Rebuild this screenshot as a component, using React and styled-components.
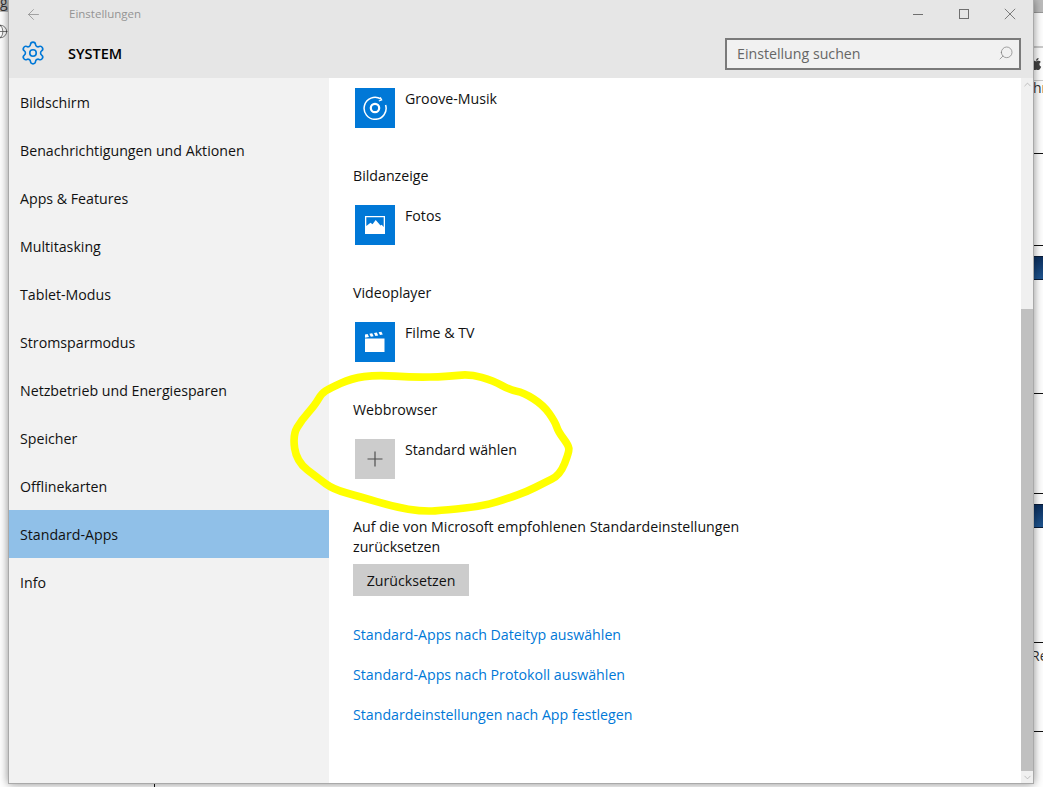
import React from 'react';
import styled, { createGlobalStyle } from 'styled-components';
import { Settings, Globe, ArrowLeft, Search, ChevronUp, ChevronDown } from 'lucide-react';
import { FaApple } from 'react-icons/fa';

const GlobalStyle = createGlobalStyle`
  html, body {
    margin: 0;
    padding: 0;
    background: #fff;
  }
  * {
    box-sizing: border-box;
  }
`;

const FONT = `"Open Sans", "Noto Sans", "Liberation Sans", sans-serif`;
const TEXT_SIZE = '14.2px';

const Desktop = styled.div`
  position: relative;
  width: 1043px;
  height: 787px;
  overflow: hidden;
  background: #fff;
  font-family: ${FONT};
`;

/* page behind the settings window */
const BehindBand = styled.div`
  position: absolute;
  top: 0;
  left: 0;
  right: 0;
  height: 12px;
  background: #bcbcbc;
`;

const BehindLine = styled.div`
  position: absolute;
  top: ${props => props.$top}px;
  left: ${props => props.$left || 1000}px;
  right: 0;
  height: 1px;
  background: ${props => props.$color || '#111'};
`;

const BehindBlue = styled.div`
  position: absolute;
  top: ${props => props.$top}px;
  left: 1033px;
  right: 0;
  height: 24px;
  background: linear-gradient(#0b2f5e, #1f5590);
  border-top: 1px solid #0a1c38;
  border-bottom: 1px solid #0a1c38;
`;

const BehindText = styled.span`
  position: absolute;
  top: ${props => props.$top}px;
  left: ${props => props.$left}px;
  font-size: 14px;
  line-height: 16px;
  color: #333;
`;

const BehindIcon = styled.span`
  position: absolute;
  top: ${props => props.$top}px;
  left: ${props => props.$left}px;
  display: flex;
  color: #444;
`;

const BottomTick = styled.div`
  position: absolute;
  left: 154px;
  bottom: 0;
  width: 1px;
  height: 4px;
  background: #111;
`;

const Window = styled.div`
  position: relative;
  margin-left: 8px;
  width: 1026px;
  height: 784px;
  display: flex;
  flex-direction: column;
  border: 1px solid #a9a9a9;
  border-top: none;
  background: #fff;
  box-shadow: 0 0 9px rgba(0, 0, 0, 0.45);
`;

const Header = styled.header`
  height: 78px;
  flex: none;
  display: flex;
  flex-direction: column;
  background: #e6e6e6;
`;

const TitleBar = styled.div`
  height: 28px;
  display: flex;
  align-items: center;
  padding-left: 16px;
`;

const BackButton = styled.span`
  display: flex;
  width: 44px;
  color: #8c8c8c;
`;

const TitleText = styled.span`
  font-size: 11.5px;
  line-height: 28px;
  height: 28px;
  align-self: flex-start;
  color: #949494;
`;

const WindowControls = styled.div`
  margin-left: auto;
  display: flex;
  align-items: center;
  color: #6f6f6f;
`;

const ControlButton = styled.span`
  width: 46px;
  height: 28px;
  display: flex;
  align-items: center;
  justify-content: center;
`;

const HeaderRow = styled.div`
  flex: 1;
  display: flex;
  align-items: flex-start;
  padding: 10px 12px 0 11px;
`;

const GearWrap = styled.span`
  display: flex;
  margin-top: 2px;
  width: 48px;
  color: #0078d7;
`;

const PageTitle = styled.h1`
  margin: 0;
  font-size: 14.5px;
  font-weight: 600;
  line-height: 32px;
  color: #000;
`;

const SearchBox = styled.div`
  margin-left: auto;
  width: 296px;
  height: 32px;
  display: flex;
  align-items: center;
  justify-content: space-between;
  padding: 0 5px 2px 10px;
  border: 2px solid #7a7a7a;
  background: #f1f1f1;
  font-size: ${TEXT_SIZE};
  color: #666;
`;

const SearchIcon = styled(Search)`
  transform: scaleX(-1);
  color: #777;
`;

const Body = styled.div`
  flex: 1;
  display: flex;
  min-height: 0;
`;

const Sidebar = styled.nav`
  width: 320px;
  flex: none;
  background: #f2f2f2;
`;

const NavItem = styled.div`
  height: 48px;
  display: flex;
  align-items: center;
  padding-left: 11px;
  font-size: ${TEXT_SIZE};
  color: #111;
  background: ${props => (props.$active ? '#90c0e8' : 'transparent')};
`;

const Content = styled.main`
  flex: 1;
  overflow: hidden;
  padding: 10px 0 0 24px;
`;

const SectionLabel = styled.div`
  font-size: ${TEXT_SIZE};
  line-height: 22px;
  height: 20px;
  color: #111;
  margin-bottom: 20px;
`;

const AppRow = styled.div`
  display: flex;
  gap: 10px;
  margin-left: 2px;
  margin-bottom: 37px;
  font-size: ${TEXT_SIZE};
  line-height: 22px;
  color: #111;
`;

const AppTile = styled.span`
  width: 40px;
  height: 40px;
  flex: none;
  display: flex;
  align-items: center;
  justify-content: center;
  color: ${props => (props.$empty ? '#4f4f4f' : '#fff')};
  background: ${props => (props.$empty ? '#cccccc' : '#0078d7')};
`;

const ResetText = styled.p`
  margin: 0;
  padding-top: 1px;
  width: 400px;
  font-size: ${TEXT_SIZE};
  line-height: 20px;
  color: #111;
`;

const ResetButton = styled.button`
  display: block;
  width: 116px;
  height: 32px;
  margin: 7px 0 18px;
  padding: 0;
  border: none;
  background: #cccccc;
  font-family: inherit;
  font-size: ${TEXT_SIZE};
  color: #111;
`;

const LinkItem = styled.a`
  display: block;
  height: 40px;
  padding-top: 11px;
  font-size: ${TEXT_SIZE};
  line-height: 20px;
  color: #0078d7;
  text-decoration: none;
`;

const Scrollbar = styled.div`
  width: 12px;
  flex: none;
  display: flex;
  flex-direction: column;
  background: #f0f0f0;
`;

const ScrollArrow = styled.span`
  height: 12px;
  flex: none;
  display: flex;
  align-items: center;
  justify-content: center;
  color: #a8a8a8;
`;

const ScrollTrack = styled.div`
  flex: 1;
  display: flex;
  flex-direction: column;
  justify-content: flex-end;
`;

const ScrollThumb = styled.div`
  height: 462px;
  background: #c0c0c0;
`;

const Scribble = styled.svg`
  position: absolute;
  left: 280px;
  top: 360px;
  pointer-events: none;
`;

const MinimizeIcon = () => (
  <svg width="12" height="12" viewBox="0 0 12 12" stroke="currentColor" fill="none" shapeRendering="crispEdges">
    <path d="M1 6.5h10" />
  </svg>
);

const MaximizeIcon = () => (
  <svg width="12" height="12" viewBox="0 0 12 12" stroke="currentColor" fill="none" shapeRendering="crispEdges">
    <rect x="1.5" y="1.5" width="9" height="9" />
  </svg>
);

const CloseIcon = () => (
  <svg width="12" height="12" viewBox="0 0 12 12" stroke="currentColor" fill="none" strokeWidth="0.9">
    <path d="M.8.8l10.4 10.4M11.2.8L.8 11.2" />
  </svg>
);

const PlusIcon = () => (
  <svg width="16" height="16" viewBox="0 0 16 16" stroke="currentColor" fill="none" strokeWidth="1.2">
    <path d="M8 .5v15M.5 8h15" />
  </svg>
);

const GrooveIcon = () => (
  <svg width="24" height="24" viewBox="0 0 24 24" fill="none" stroke="currentColor">
    <path d="M17.8 2.9A11 11 0 1 0 22.6 9" strokeWidth="1.5" />
    <path d="M17.2 1.4l1.4 2.6-2.8 1" strokeWidth="1.3" />
    <circle cx="12" cy="12" r="4.2" strokeWidth="2.2" />
  </svg>
);

const PhotoIcon = () => (
  <svg width="22" height="22" viewBox="0 0 22 22">
    <path fill="currentColor" fillRule="evenodd" d="M1 2h20v18H1zM2.3 3.3v8.7l4.2-3.2 2 1.5L11.7 6l4.8 5.5 1.2-.8 2 2.3V3.3z" />
  </svg>
);

const FilmIcon = () => (
  <svg width="22" height="22" viewBox="0 0 22 22" fill="currentColor">
    <path d="M1 7.5h19.5V21H1z" />
    <path d="M1 3.6l2.6-.5 1.4 2.9-4 .7zM5.4 2.8l2.8-.5 1.4 2.9-2.8.5zM10 2l2.8-.5 1.4 2.9-2.8.5zM14.6 1.2l2.8-.5 1.4 2.9-2.8.5z" />
  </svg>
);

const NAV_ITEMS = [
  'Bildschirm',
  'Benachrichtigungen und Aktionen',
  'Apps & Features',
  'Multitasking',
  'Tablet-Modus',
  'Stromsparmodus',
  'Netzbetrieb und Energiesparen',
  'Speicher',
  'Offlinekarten',
  'Standard-Apps',
  'Info',
];

const LINKS = [
  'Standard-Apps nach Dateityp auswählen',
  'Standard-Apps nach Protokoll auswählen',
  'Standardeinstellungen nach App festlegen',
];

// traced from the hand drawn marker ring
const RING = [
  [150, 85], [215, 55], [290, 45], [400, 52], [500, 50], [570, 42], [640, 62], [690, 90],
  [730, 97], [790, 135], [825, 185], [835, 215], [865, 255], [868, 275], [840, 345],
  [790, 370], [740, 395], [690, 413], [610, 438], [500, 450], [430, 455], [340, 440],
  [240, 410], [160, 388], [115, 355], [50, 305], [38, 225], [65, 180], [105, 135], [125, 100],
];

const ringPath = () => {
  const mid = (a, b) => [(a[0] + b[0]) / 2, (a[1] + b[1]) / 2];
  const start = mid(RING[RING.length - 1], RING[0]);
  let d = `M${start[0]} ${start[1]}`;
  RING.forEach((pt, i) => {
    const m = mid(pt, RING[(i + 1) % RING.length]);
    d += ` Q${pt[0]} ${pt[1]} ${m[0]} ${m[1]}`;
  });
  return d + 'Z';
};

export default function App() {
  return (
    <Desktop>
      <GlobalStyle />
      <BehindBand />
      <BehindText $top={-6} $left={0}>ge</BehindText>
      <BehindIcon $top={24} $left={-7}><Globe size={15} strokeWidth={1.1} /></BehindIcon>
      <BehindLine $top={46} $left={0} $color="#ccc" />
      <BehindLine $top={12} $left={0} $color="#999" />
      <BehindLine $top={47} $color="#ccc" />
      <BehindIcon $top={57} $left={1029}><FaApple size={14} /></BehindIcon>
      <BehindLine $top={80} $color="#ccc" />
      <BehindText $top={80} $left={1033}>hr</BehindText>
      <BehindLine $top={153} />
      <BehindLine $top={245} />
      <BehindBlue $top={256} />
      <BehindLine $top={393} />
      <BehindLine $top={493} />
      <BehindBlue $top={504} />
      <BehindLine $top={642} />
      <BehindText $top={648} $left={1031}>Re</BehindText>
      <BehindLine $top={731} />
      <BottomTick />

      <Window>
        <Header>
          <TitleBar>
            <BackButton><ArrowLeft size={17} strokeWidth={1.1} /></BackButton>
            <TitleText>Einstellungen</TitleText>
            <WindowControls>
              <ControlButton><MinimizeIcon /></ControlButton>
              <ControlButton><MaximizeIcon /></ControlButton>
              <ControlButton><CloseIcon /></ControlButton>
            </WindowControls>
          </TitleBar>
          <HeaderRow>
            <GearWrap><Settings size={26} strokeWidth={1.5} /></GearWrap>
            <PageTitle>SYSTEM</PageTitle>
            <SearchBox>
              Einstellung suchen
              <SearchIcon size={16} strokeWidth={1} />
            </SearchBox>
          </HeaderRow>
        </Header>
        <Body>
          <Sidebar>
            {NAV_ITEMS.map(item => (
              <NavItem key={item} $active={item === 'Standard-Apps'}>{item}</NavItem>
            ))}
          </Sidebar>
          <Content>
            <AppRow>
              <AppTile><GrooveIcon /></AppTile>
              Groove-Musik
            </AppRow>
            <SectionLabel>Bildanzeige</SectionLabel>
            <AppRow>
              <AppTile><PhotoIcon /></AppTile>
              Fotos
            </AppRow>
            <SectionLabel>Videoplayer</SectionLabel>
            <AppRow>
              <AppTile><FilmIcon /></AppTile>
              Filme &amp; TV
            </AppRow>
            <SectionLabel>Webbrowser</SectionLabel>
            <AppRow>
              <AppTile $empty><PlusIcon /></AppTile>
              Standard wählen
            </AppRow>
            <ResetText>Auf die von Microsoft empfohlenen Standardeinstellungen zurücksetzen</ResetText>
            <ResetButton>Zurücksetzen</ResetButton>
            {LINKS.map(link => (
              <LinkItem key={link}>{link}</LinkItem>
            ))}
          </Content>
          <Scrollbar>
            <ScrollArrow><ChevronUp size={11} strokeWidth={1.5} /></ScrollArrow>
            <ScrollTrack><ScrollThumb /></ScrollTrack>
            <ScrollArrow><ChevronDown size={11} strokeWidth={1.5} /></ScrollArrow>
          </Scrollbar>
        </Body>
      </Window>

      <Scribble width="310" height="160" viewBox="0 0 930 480" fill="none">
        <path d={ringPath()} stroke="#ffff00" strokeWidth="23" strokeLinejoin="round" />
      </Scribble>
    </Desktop>
  );
}
